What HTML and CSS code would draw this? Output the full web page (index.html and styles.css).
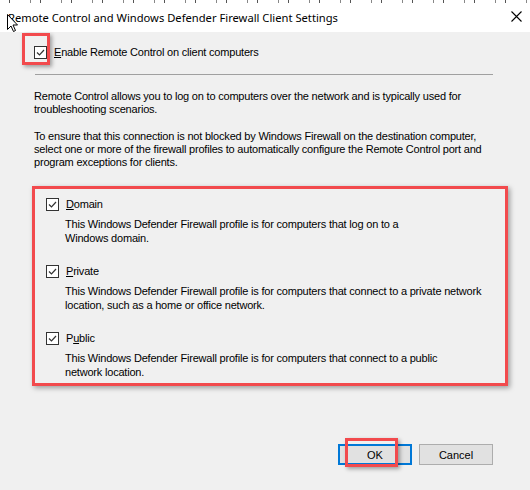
FILE: index.html
```html
<!DOCTYPE html>
<html>
<head>
<meta charset="utf-8">
<link rel="stylesheet" href="styles.css">
</head>
<body>
<div class="window">
  <div class="topstrip"></div>
  <div class="titlebar">
    <span class="title">Remote Control and Windows Defender Firewall Client Settings</span>
    <svg class="close" width="11" height="11" viewBox="0 0 11 11"><path d="M0.5 0.5 L10.5 10.5 M10.5 0.5 L0.5 10.5" stroke="#000" stroke-width="1.1" fill="none"/></svg>
  </div>
  <div class="content">
    <div class="enable-row">
      <span class="check"><svg width="13" height="13" viewBox="0 0 13 13"><rect x="0.5" y="0.5" width="12" height="12" fill="#fff" stroke="#333"/><path d="M3 6.5 L5.5 9 L10 4" stroke="#333" stroke-width="1.2" fill="none"/></svg></span>
      <span class="label"><u>E</u>nable Remote Control on client computers</span>
      <span class="mark mark-enable"></span>
    </div>
    <div class="separator"></div>
    <p class="para">Remote Control allows you to log on to computers over the network and is typically used for<br>troubleshooting scenarios.</p>
    <p class="para para2">To ensure that this connection is not blocked by Windows Firewall on the destination computer,<br>select one or more of the firewall profiles to automatically configure the Remote Control port and<br>program exceptions for clients.</p>
    <div class="profiles">
      <div class="profile">
        <div class="profile-head">
          <span class="check"><svg width="13" height="13" viewBox="0 0 13 13"><rect x="0.5" y="0.5" width="12" height="12" fill="#fff" stroke="#333"/><path d="M3 6.5 L5.5 9 L10 4" stroke="#333" stroke-width="1.2" fill="none"/></svg></span>
          <span class="label"><u>D</u>omain</span>
        </div>
        <p class="desc">This Windows Defender Firewall profile is for computers that log on to a<br>Windows domain.</p>
      </div>
      <div class="profile">
        <div class="profile-head">
          <span class="check"><svg width="13" height="13" viewBox="0 0 13 13"><rect x="0.5" y="0.5" width="12" height="12" fill="#fff" stroke="#333"/><path d="M3 6.5 L5.5 9 L10 4" stroke="#333" stroke-width="1.2" fill="none"/></svg></span>
          <span class="label"><u>P</u>rivate</span>
        </div>
        <p class="desc">This Windows Defender Firewall profile is for computers that connect to a private network<br>location, such as a home or office network.</p>
      </div>
      <div class="profile">
        <div class="profile-head">
          <span class="check"><svg width="13" height="13" viewBox="0 0 13 13"><rect x="0.5" y="0.5" width="12" height="12" fill="#fff" stroke="#333"/><path d="M3 6.5 L5.5 9 L10 4" stroke="#333" stroke-width="1.2" fill="none"/></svg></span>
          <span class="label">P<u>u</u>blic</span>
        </div>
        <p class="desc">This Windows Defender Firewall profile is for computers that connect to a public<br>network location.</p>
      </div>
    </div>
    <div class="buttons">
      <button class="btn btn-ok">OK<span class="mark mark-ok"></span></button>
      <button class="btn">Cancel</button>
    </div>
  </div>
  <svg class="cursor" width="12" height="19" viewBox="0 0 12 19"><path d="M0.5 0.5 L0.5 15.5 L4 12 L6.5 17.5 L8.5 16.5 L6 11 L10.5 11 Z" fill="#fff" stroke="#000" stroke-width="1"/></svg>
</div>
</body>
</html>
```
FILE: styles.css
```css
html, body {
  margin: 0;
  padding: 0;
}
body {
  width: 530px;
  height: 490px;
  overflow: hidden;
  background: #f0f0f0;
  font-family: "Liberation Sans", Arial, sans-serif;
  font-size: 11px;
  letter-spacing: -0.2px;
  color: #000;
}
.window {
  position: relative;
  width: 530px;
  height: 490px;
  background: #f0f0f0;
}
.topstrip {
  height: 3px;
  background: repeating-linear-gradient(90deg, #fff 0 9px, #555 9px 10px, #fff 10px 30px, #888 30px 31px);
}
.titlebar {
  height: 29px;
  background: #fff;
  display: flex;
  align-items: center;
  justify-content: space-between;
  padding: 0 8px 0 8px;
}
.title {
  font-family: "Noto Sans", sans-serif;
  font-size: 11.2px;
  letter-spacing: 0;
  white-space: nowrap;
  margin-top: -1px;
}
.close {
  margin-top: -3px;
}
.content {
  padding: 0 0 0 34px;
}
.enable-row {
  position: relative;
  display: flex;
  align-items: center;
  height: 13px;
  margin-top: 14px;
}
.check {
  width: 13px;
  height: 13px;
  flex: none;
  display: block;
}
.check svg {
  display: block;
}
.label {
  margin-left: 7px;
  white-space: nowrap;
  line-height: 13px;
}
.mark {
  position: absolute;
  border: 3px solid #f24a4d;
  box-shadow: 2px 2px 4px rgba(0, 0, 0, 0.35);
  pointer-events: none;
}
.mark-enable {
  left: -12px;
  top: -13px;
  width: 22px;
  height: 26px;
}
.separator {
  margin-top: 15px;
  width: 458px;
  height: 1px;
  background: #a0a0a0;
  margin-left: 1px;
}
.para {
  margin: 15px 0 0 0;
  line-height: 13px;
  white-space: nowrap;
}
.para2 {
  margin-top: 14px;
}
.profiles {
  margin: 17px 0 0 -2px;
  width: 459px;
  height: 185px;
  border: 3px solid #f24a4d;
  box-shadow: 2px 2px 5px rgba(0, 0, 0, 0.35);
  padding: 9px 0 0 11px;
  box-sizing: content-box;
}
.profile {
  height: 67px;
}
.profile-head {
  display: flex;
  align-items: center;
  height: 13px;
}
.desc {
  margin: 6px 0 0 19px;
  line-height: 14px;
  white-space: nowrap;
}
.buttons {
  display: flex;
  gap: 7px;
  margin: 58px 0 0 304px;
}
.btn {
  position: relative;
  width: 74px;
  height: 21px;
  font-family: inherit;
  font-size: 11px;
  letter-spacing: 0;
  color: #000;
  background: #e1e1e1;
  border: 1px solid #adadad;
  padding: 0;
  margin: 0;
}
.btn-ok {
  border: 2px solid #0078d7;
}
.mark-ok {
  left: 5px;
  top: -8px;
  width: 47px;
  height: 23px;
}
.cursor {
  position: absolute;
  left: 7px;
  top: 14px;
}
```
